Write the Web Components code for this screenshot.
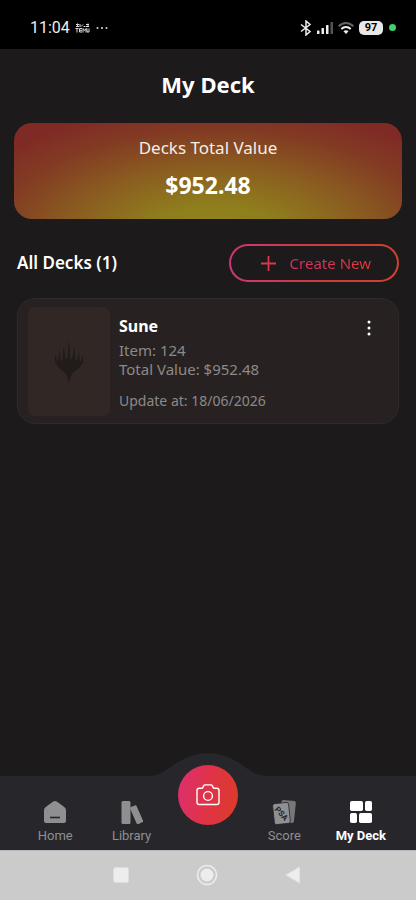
<!DOCTYPE html>
<html lang="en">
<head>
<meta charset="utf-8">
<meta name="viewport" content="width=device-width, initial-scale=1">
<title>My Deck</title>
<style>
  html, body { margin: 0; }
  body { background: #1c1a1b; color: #fff; font-family: "Noto Sans", sans-serif; }
</style>
</head>
<body>
<deck-app></deck-app>
<script>
const define = (name, html) => {
  const template = document.createElement("template");
  template.innerHTML = "<style>*{box-sizing:border-box}svg{display:block}</style>" + html;
  customElements.define(name, class extends HTMLElement {
    constructor() {
      super();
      this.attachShadow({ mode: "open" }).append(template.content.cloneNode(true));
    }
  });
};

define("status-bar", `
<style>
  :host { display: flex; align-items: center; justify-content: space-between; height: 49px; padding: 6px 20px 0 30px; background: #000; font-family: Roboto, sans-serif; color: #eee; }
  .group { display: flex; align-items: center; gap: 5px; }
  time { font-size: 16px; line-height: 20px; }
  .battery { width: 24px; height: 14px; border-radius: 5px; background: #e8e8e8; color: #000; font-size: 11px; line-height: 14px; font-weight: 700; text-align: center; }
  .dot { width: 7px; height: 7px; border-radius: 50%; background: #43cf6c; margin-left: 1px; }
</style>
<div class="group">
  <time>11:04</time>
  <svg width="15" height="10" viewBox="0 0 15 10" fill="none" stroke="#ddd" stroke-width="1"><path d="M1 1.500h3M1 3.500h3M5 1v3M6 3.500l2-2M8.500 3.500h2M11 1.500h3M11 3.500h3M13 .5v3.500M2.500.5v3.500"/><path d="M.5 5.500h3M2 5.500v4M7 5.500H4.500v3.500H7M4.500 7.300H7M8 9.500v-4l1.500 2 1.500-2v4M12 5.500V9h2V5.500"/></svg>
  <svg width="14" height="4" viewBox="0 0 14 4" fill="#ddd"><circle cx="2.500" cy="2" r="1"/><circle cx="7" cy="2" r="1"/><circle cx="11.500" cy="2" r="1"/></svg>
</div>
<div class="group">
  <svg width="12" height="16" viewBox="0 0 12 16" fill="none" stroke="#eee" stroke-width="1.500"><path d="M1 4.500l9 7L6 15V1l4 3.500-9 7"/></svg>
  <svg width="16" height="14" viewBox="0 0 16 14"><g fill="#eee"><rect y="9.500" width="2.500" height="3.500" rx=".5"/><rect x="4.500" y="7" width="2.500" height="6" rx=".5"/><rect x="9" y="4" width="2.500" height="9" rx=".5"/></g><rect x="13.500" y="1" width="2.500" height="12" rx=".5" fill="#555"/></svg>
  <svg width="16" height="14" viewBox="0 0 16 14" fill="none" stroke-width="2"><path d="M.7 5.200C5 .8 11 .8 15.300 5.200" stroke="#666"/><path d="M3.300 8C6 5.200 10 5.200 12.700 8" stroke="#eee"/><path d="M5.500 10.200c1.500-1.300 3.500-1.300 5 0L8 13z" fill="#eee"/></svg>
  <div class="battery">97</div>
  <div class="dot"></div>
</div>`);

define("value-banner", `
<style>
  :host { display: flex; flex-direction: column; align-items: center; gap: 8px; margin: 0 14px; padding: 12px 0 17px; border-radius: 18px;
    background: radial-gradient(ellipse 72% 140% at 52% 120%, #8f861b 0%, #8f7e1d 25%, #8a5c20 54%, #823b23 80%, #7f2a25 100%); }
  .label { font-size: 17px; line-height: 25px; color: #f6eee9; }
  .value { font-size: 23px; line-height: 34px; font-weight: 700; }
</style>
<div class="label"><slot name="label"></slot></div>
<div class="value"><slot name="value"></slot></div>`);

define("create-button", `
<style>
  :host { display: block; }
  button { display: flex; align-items: center; gap: 14px; height: 38px; padding: 0 26px 0 30px; border: 2px solid transparent; border-radius: 19px; cursor: pointer;
    background: linear-gradient(#1c1a1b, #1c1a1b) padding-box, linear-gradient(90deg, #cf3674, #d03a42 50%, #d0412f) border-box; }
  span { font: 400 15px/22px "Noto Sans", sans-serif; color: transparent; background: linear-gradient(90deg, #d6306a, #de3a38); background-clip: text; -webkit-background-clip: text; }
</style>
<button type="button">
  <svg width="15" height="15" viewBox="0 0 15 15" stroke="#df3650" stroke-width="1.800"><path d="M7.500 0v15M0 7.500h15"/></svg>
  <span><slot></slot></span>
</button>`);

define("deck-card", `
<style>
  :host { display: flex; gap: 9px; margin: 0 17px; padding: 8px 16px 7px 10px; border: 1px solid #2f2a2a; border-radius: 18px; background: #272221; }
  .cover { display: grid; place-items: center; width: 82px; height: 109px; border-radius: 7px; background: #312725; }
  .info { flex: 1; color: #8c8989; font-size: 15px; line-height: 19px; }
  h3 { margin: 7px 0 3px; font-size: 16px; line-height: 24px; font-weight: 700; color: #fff; }
  p { margin: 0; }
  .date { margin-top: 12px; font-size: 14px; }
  button { align-self: flex-start; margin-top: 8px; width: 26px; height: 26px; padding: 0; border: 0; background: none; cursor: pointer; display: grid; place-items: center; }
</style>
<div class="cover">
  <svg width="30" height="44" viewBox="0 0 30 44" fill="#211b1a"><path d="M15 0l1.500 18 1 1.500 1-1.500L20.300 5.500l1.200 14.500 1 .8 1-1.300L25 10.500l.8 10.500 1 .2L28.500 15c.8 2.500.8 4.500.2 6.500l.8 2-1.700-.2C26 28 23.500 29.500 20.500 31.500 17.500 34 16 37.500 15 44c-1-6.500-2.500-10-5.500-12.500-3-2-5.500-3.500-7.300-8.200l-1.700.2.800-2c-.6-2-.6-4 .2-6.500l1.700 6.200 1-.2.8-10.500 1.500 9 1 1.300 1-.8L9.700 5.500l1.800 12.500 1 1.500 1-1.500z"/></svg>
</div>
<div class="info">
  <h3><slot name="name"></slot></h3>
  <p><slot name="items"></slot></p>
  <p><slot name="value"></slot></p>
  <p class="date"><slot name="date"></slot></p>
</div>
<button type="button" aria-label="Deck options">
  <svg width="4" height="16" viewBox="0 0 4 16" fill="#fff"><circle cx="2" cy="2" r="1.500"/><circle cx="2" cy="8" r="1.500"/><circle cx="2" cy="14" r="1.500"/></svg>
</button>`);

define("nav-item", `
<style>
  :host { display: block; color: #8f8f91; font: 400 13px/16px Roboto, sans-serif; }
  :host([active]) { color: #fff; font-weight: 700; }
  a { display: flex; flex-direction: column; align-items: center; gap: 3px; color: inherit; text-decoration: none; white-space: nowrap; }
  .icon { display: grid; place-items: center; height: 26px; }
</style>
<a href="#"><div class="icon"><slot name="icon"></slot></div><slot></slot></a>`);

define("bottom-nav", `
<style>
  :host { position: relative; display: grid; grid-template-columns: repeat(5, 1fr); height: 74px; padding: 23px 17px 0; background: #27262b; }
  .hump { position: absolute; left: 50%; top: -23px; transform: translateX(-50%); }
  .scan { position: absolute; left: 50%; top: -11px; transform: translateX(-50%); display: grid; place-items: center; width: 60px; height: 60px; padding: 0; border: 0; border-radius: 50%; cursor: pointer; background: linear-gradient(100deg, #dc2f70, #e03347 50%, #dc3b28); }
  text { font: 700 8px Roboto, sans-serif; }
</style>
<svg class="hump" width="124" height="24" viewBox="0 0 124 24" fill="#27262b"><path d="M0 23.500C17 23 22 15 34 8c18-10.500 38-10.500 56 0 12 7 17 15 34 15.500V24H0z"/></svg>
<nav-item>
  <svg slot="icon" width="22" height="22" viewBox="0 0 22 22"><path fill="currentColor" d="M9.200.6q1.800-1 3.600 0l7.500 5.400q1.700 1.200 1.700 3.200V20q0 2-2 2H2q-2 0-2-2V9.200Q0 7.200 1.700 6z"/><path stroke="#27262b" stroke-width="1.600" d="M6 16.500h10"/></svg>
  Home
</nav-item>
<nav-item>
  <svg slot="icon" width="22" height="23" viewBox="0 0 22 23" fill="currentColor"><rect x=".5" width="9" height="23" rx="1.500"/><rect x="12" y="4.500" width="7" height="18.500" rx="1.500" transform="rotate(-24 15.500 13.500)"/></svg>
  Library
</nav-item>
<span></span>
<nav-item>
  <svg slot="icon" width="24" height="26" viewBox="0 0 24 26"><rect x="8.500" y="1.500" width="14.500" height="22" rx="2" transform="rotate(6 16 12)" fill="#777779"/><rect x="1.500" y="4" width="16" height="21" rx="2" transform="rotate(-6 9.500 14.500)" fill="#909092" stroke="#27262b" stroke-width=".8"/><text transform="translate(7.500 16.500) rotate(48)" text-anchor="middle" fill="#27262b">PSA</text></svg>
  Score
</nav-item>
<nav-item active>
  <svg slot="icon" width="22" height="22" viewBox="0 0 22 22" fill="currentColor"><rect width="13" height="10" rx="1.800"/><rect x="15" width="7" height="10" rx="1.800"/><rect y="12" width="7" height="10" rx="1.800"/><rect x="9" y="12" width="13" height="10" rx="1.800"/></svg>
  My Deck
</nav-item>
<button class="scan" type="button" aria-label="Scan card">
  <svg width="24" height="22" viewBox="0 0 24 22" fill="none" stroke="#fff" stroke-width="1.400" stroke-linejoin="round"><path d="M3.300 4.200h2.500q.7 0 1-.6l.9-1.900q.4-.8 1.300-.8h6q.9 0 1.300.8l.9 1.900q.3.600 1 .6h2.500q2.300 0 2.300 2.300v11.700q0 2.300-2.300 2.300H3.300Q1 20.500 1 18.200V6.500q0-2.300 2.300-2.300z"/><circle cx="12" cy="12" r="4.400"/></svg>
</button>`);

define("system-bar", `
<style>
  :host { display: flex; align-items: center; justify-content: center; gap: 67px; height: 50px; padding: 0 3px 2px 0; background: #cbcbcb; border-top: 1px solid #b8b8bc; }
</style>
<svg width="16" height="16" viewBox="0 0 16 16"><rect x=".5" y=".5" width="15" height="15" rx="2" fill="#ededed" stroke="#dedede"/></svg>
<svg width="22" height="22" viewBox="0 0 22 22" fill="#ededed"><circle cx="11" cy="11" r="9.500" fill="none" stroke="#ededed" stroke-width="1.600"/><circle cx="11" cy="11" r="6.500"/></svg>
<svg width="16" height="18" viewBox="0 0 16 18"><path d="M1 9L14.500 1v16z" fill="#ededed" stroke="#e2e2e2" stroke-linejoin="round"/></svg>`);

define("deck-app", `
<style>
  :host { display: flex; flex-direction: column; min-height: 100vh; }
  main { flex: 1; }
  h1 { margin: 19px 0 23px; font-size: 22px; line-height: 32px; font-weight: 700; text-align: center; }
  .row { display: flex; align-items: center; justify-content: space-between; margin: 25px 17px 16px; }
  h2 { margin: 0; font-size: 17px; line-height: 24px; font-weight: 600; }
</style>
<status-bar></status-bar>
<main>
  <h1>My Deck</h1>
  <value-banner><span slot="label">Decks Total Value</span><span slot="value">$952.48</span></value-banner>
  <div class="row"><h2>All Decks (1)</h2><create-button>Create New</create-button></div>
  <deck-card>
    <span slot="name">Sune</span><span slot="items">Item: 124</span><span slot="value">Total Value: $952.48</span><span slot="date">Update at: 18/06/2026</span>
  </deck-card>
</main>
<bottom-nav></bottom-nav>
<system-bar></system-bar>`);
</script>
</body>
</html>
